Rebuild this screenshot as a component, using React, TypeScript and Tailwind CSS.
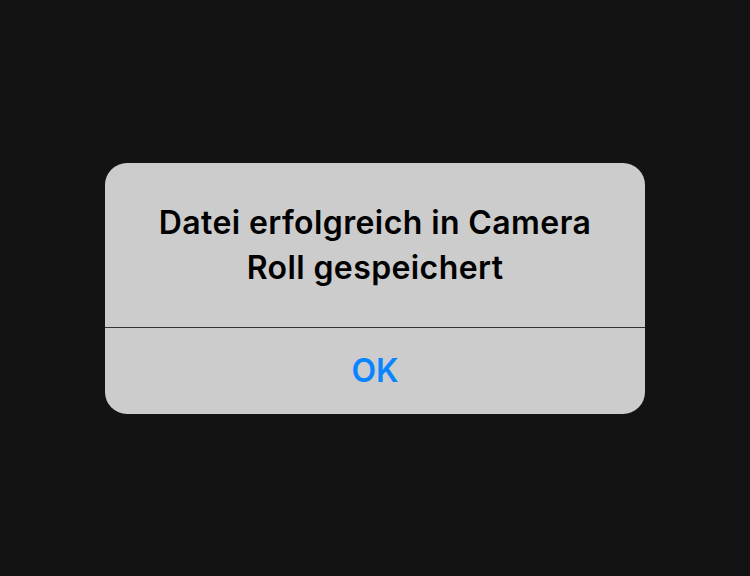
export default function App() {
  return (
    <div
      className="flex h-screen w-full items-center justify-center bg-[#131313]"
      style={{ fontFamily: "Inter, 'Noto Sans', sans-serif" }}
    >
      <div className="flex w-[540px] flex-col overflow-hidden rounded-[22px] bg-[#cccccc]">
        <div className="flex h-[164px] items-center justify-center px-10">
          <p className="text-center text-[32px] font-semibold leading-[45px] tracking-[0.4px] text-black">
            Datei erfolgreich in Camera Roll gespeichert
          </p>
        </div>
        <div className="h-px bg-[#333333]" />
        <button
          type="button"
          className="flex h-[86px] items-center justify-center text-[32px] font-semibold text-[#0a84ff]"
        >
          OK
        </button>
      </div>
    </div>
  );
}
